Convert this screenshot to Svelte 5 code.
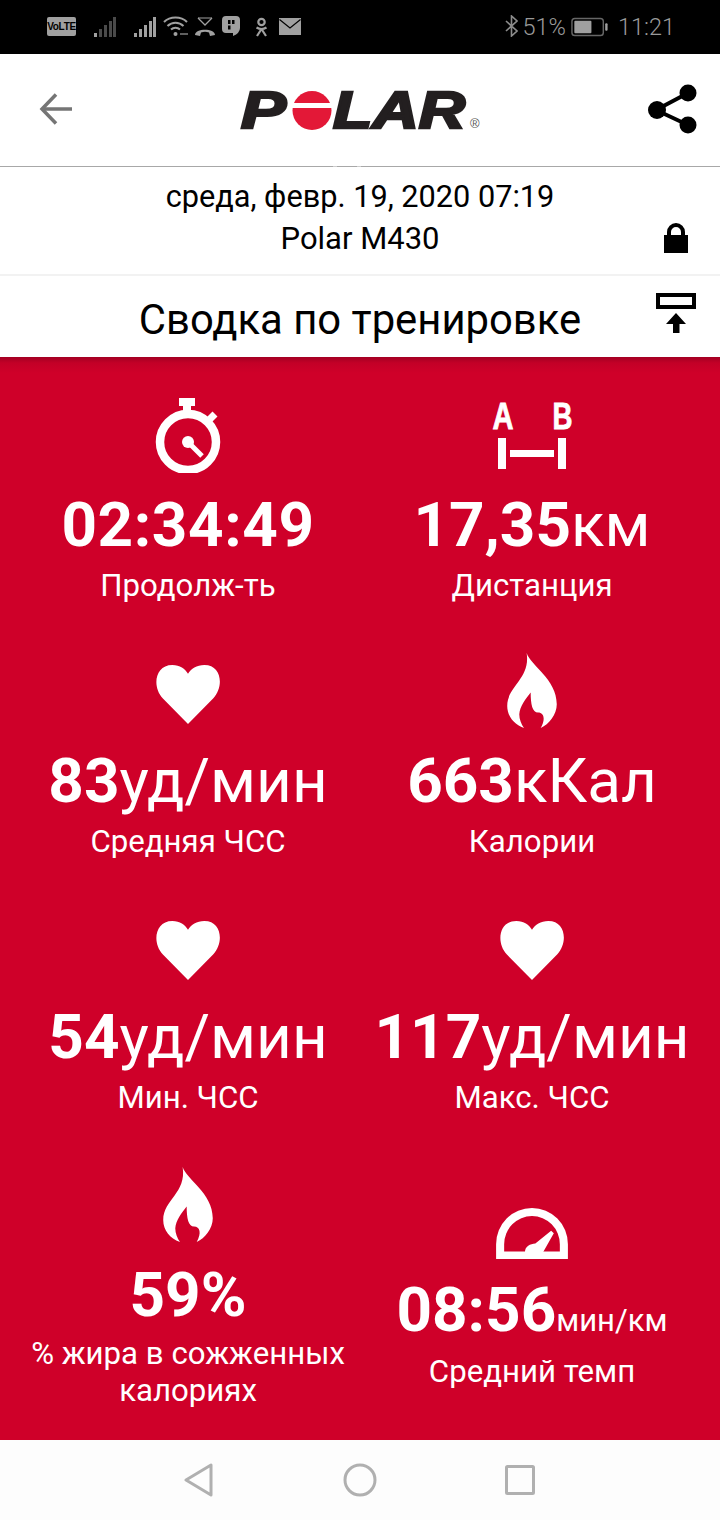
<script>
  const heart = "M144 195 L68 118 C36 84 44 18 97 18 C120 18 135 30 144 44 C153 30 170 18 193 18 C246 18 252 84 220 118 Z";
  const flame = "M138 12 C150 50 228 90 228 165 C228 195 205 225 180 236 C195 210 190 190 172 190 C155 190 150 165 150 130 C135 150 118 170 116 195 C116 210 122 225 130 236 C100 225 80 200 80 170 C80 110 150 90 138 12Z";
</script>

{#snippet heartIcon()}
  <svg class="ic heart" width="64" height="59" viewBox="48 18 192 177"><path d={heart} fill="#fff"/></svg>
{/snippet}
{#snippet flameIcon()}
  <svg class="ic flame" width="50" height="75" viewBox="80 12 148 224"><path d={flame} fill="#fff"/></svg>
{/snippet}

<div class="page">
  <div class="status">
    <span class="volte">VoLTE</span>
    <svg class="s1" width="22" height="20" viewBox="0 0 22 20">
      <g fill="#a0a0a0"><rect x="0" y="16" width="3" height="4"/></g>
      <g fill="#4a4a4a"><rect x="5" y="12" width="3" height="8"/><rect x="10" y="8" width="3" height="12"/><rect x="15" y="4" width="3" height="16"/><rect x="19" y="0" width="3" height="20"/></g>
    </svg>
    <svg class="s2" width="22" height="20" viewBox="0 0 22 20" fill="#a0a0a0">
      <rect x="0" y="16" width="3" height="4"/><rect x="5" y="12" width="3" height="8"/><rect x="10" y="8" width="3" height="12"/><rect x="15" y="4" width="3" height="16"/><rect x="19" y="0" width="3" height="20"/>
    </svg>
    <svg class="s3" width="26" height="21" viewBox="0 0 26 21" fill="none" stroke="#a0a0a0" stroke-width="2">
      <path d="M1 6 C7 0 18 0 24 6"/><path d="M4.500 10 C9 5.500 16 5.500 20.500 10"/><path d="M8 13.500 C10.500 11 14.500 11 17 13.500"/>
      <circle cx="12.500" cy="18" r="2" fill="#a0a0a0" stroke="none"/><path d="M17 18h8" stroke-width="1.200"/>
    </svg>
    <svg class="s4" width="22" height="20" viewBox="0 0 22 20" fill="none" stroke="#a0a0a0">
      <path d="M4 1 L11 8 L18 1" stroke-width="1.300"/><path d="M4 1 H18" stroke-width="1"/>
      <path d="M1 18 C1 11 21 11 21 18 L16 19 L15 15.500 C12 14.500 10 14.500 7 15.500 L6 19Z" fill="#a0a0a0" stroke="none"/>
    </svg>
    <svg class="s5" width="18" height="21" viewBox="0 0 18 21">
      <path d="M4 0 H14 Q18 0 18 4 V12 Q18 17 11 20 L11 17 H4 Q0 17 0 13 V4 Q0 0 4 0Z" fill="#a0a0a0"/>
      <rect x="6" y="4" width="2.500" height="4" fill="#000"/><rect x="10" y="4" width="2.500" height="4" fill="#000"/><rect x="6" y="9.500" width="2.500" height="4" fill="#000"/>
    </svg>
    <svg class="s6" width="13" height="20" viewBox="0 0 13 20" fill="none" stroke="#a0a0a0" stroke-width="2.200">
      <circle cx="6.500" cy="5" r="3.200"/><path d="M1.500 10.500 Q6.500 13.500 11.500 10.500"/><path d="M6.500 12 L2 19 M6.500 12 L11 19"/>
    </svg>
    <svg class="s7" width="22" height="17" viewBox="0 0 22 17">
      <rect width="22" height="17" fill="#a0a0a0"/><path d="M0.500 1.500 L11 10 L21.500 1.500" fill="none" stroke="#000" stroke-width="1.200"/>
    </svg>
    <span class="spacer"></span>
    <svg class="bt" width="13" height="22" viewBox="0 0 13 22" fill="none" stroke="#8c8c8c" stroke-width="1.600">
      <path d="M1 6 L12 16 L6.500 21 V1 L12 6 L1 16"/>
    </svg>
    <span class="pct">51%</span>
    <svg class="bat" width="38" height="20" viewBox="0 0 40 20">
      <rect x="1" y="1" width="33" height="18" rx="3" fill="none" stroke="#666" stroke-width="1.500"/>
      <rect x="3.500" y="3.500" width="18" height="13" rx="1" fill="#a0a0a0"/>
      <rect x="36" y="6" width="2.500" height="8" rx="1" fill="#a0a0a0"/>
    </svg>
    <span class="time">11:21</span>
  </div>

  <header class="top">
    <svg class="back" width="34" height="32" viewBox="0 0 34 32" fill="none" stroke="#757575" stroke-width="3.500">
      <path d="M33 16 H3"/><path d="M17 1.500 L3 16 L17 30.500"/>
    </svg>
    <div class="logo">
      <span class="lg lp">P</span>
      <svg class="lo" width="40" height="39" viewBox="0 0 40 39"><ellipse cx="20" cy="19.500" rx="19.500" ry="19.500" fill="#e31837"/><rect y="12" width="40" height="5" fill="#fff"/></svg>
      <span class="lg lar">LAR</span>
      <span class="reg">®</span>
    </div>
    <svg class="share" width="50" height="50" viewBox="0 0 50 50">
      <path d="M8 26 L40 9 M8 26 L40 41" stroke="#000" stroke-width="4" fill="none"/>
      <circle cx="40" cy="9" r="8.500"/><circle cx="9" cy="26" r="9"/><circle cx="40" cy="41" r="8.500"/>
    </svg>
    <span class="dot d1"></span><span class="dot d2"></span>
  </header>

  <section class="info">
    <div class="date">среда, февр. 19, 2020 07:19</div>
    <div>Polar M430</div>
    <svg class="lock" width="24" height="30" viewBox="0 0 24 30">
      <path d="M5 13 V9 A7 7 0 0 1 19 9 V13" fill="none" stroke="#000" stroke-width="4"/><rect y="12" width="24" height="18"/>
    </svg>
  </section>

  <section class="title">
    <h1>Сводка по тренировке</h1>
    <svg class="export" width="40" height="40" viewBox="0 0 40 40">
      <rect x="2" y="2" width="36" height="12" fill="none" stroke="#000" stroke-width="4"/>
      <path d="M20 20 L30 31 H23.500 V40 H17 V31 H10Z"/>
    </svg>
  </section>

  <main class="grid">
    <div class="cell">
      <svg class="ic watch" width="66" height="76" viewBox="0 0 66 76" fill="none" stroke="#fff">
        <rect x="24" y="1" width="16" height="8" fill="#fff" stroke="none"/>
        <rect x="28" y="8" width="8" height="8" fill="#fff" stroke="none"/>
        <circle cx="33" cy="45" r="28" stroke-width="8.500"/>
        <path d="M52 25 L60 17" stroke-width="7"/>
        <circle cx="33" cy="45" r="6" fill="#fff" stroke="none"/>
        <path d="M33 45 L47 59" stroke-width="5"/>
      </svg>
      <div class="val"><b class="wide">02:34:49</b></div>
      <div class="lab">Продолж-ть</div>
    </div>
    <div class="cell">
      <svg class="ic ab" width="98" height="76" viewBox="-8 -8 98 76" fill="#fff">
        <text x="12" y="27" class="abt" text-anchor="middle" textLength="21" lengthAdjust="spacingAndGlyphs">A</text>
        <text x="71.500" y="27" class="abt" text-anchor="middle" textLength="20" lengthAdjust="spacingAndGlyphs">B</text>
        <rect x="7" y="36" width="8" height="31"/><rect x="19" y="48" width="44" height="7"/><rect x="67" y="36" width="8" height="31"/>
      </svg>
      <div class="val"><b>17,35</b>км</div>
      <div class="lab">Дистанция</div>
    </div>
    <div class="cell">
      {@render heartIcon()}
      <div class="val"><b>83</b>уд/мин</div>
      <div class="lab">Средняя ЧСС</div>
    </div>
    <div class="cell">
      {@render flameIcon()}
      <div class="val"><b>663</b>кКал</div>
      <div class="lab">Калории</div>
    </div>
    <div class="cell">
      {@render heartIcon()}
      <div class="val"><b>54</b>уд/мин</div>
      <div class="lab">Мин. ЧСС</div>
    </div>
    <div class="cell">
      {@render heartIcon()}
      <div class="val"><b>117</b>уд/мин</div>
      <div class="lab">Макс. ЧСС</div>
    </div>
    <div class="cell last-l">
      {@render flameIcon()}
      <div class="val"><b>59%</b></div>
      <div class="lab">% жира в сожженных<br/>калориях</div>
    </div>
    <div class="cell last-r">
      <svg class="ic gauge" width="72" height="51" viewBox="48 40 214 152">
        <path fill="#fff" fill-rule="evenodd" d="M48 192 V148 A107 108 0 0 1 262 148 V192 Z M72 170 H238 V148 A83 84 0 0 0 72 148 Z"/>
        <path fill="#fff" d="M134 172 C134 154 150 147 165 146 L212 108 L220 115 L188 172 Z"/>
      </svg>
      <div class="val"><b>08:56</b><small>мин/км</small></div>
      <div class="lab">Средний темп</div>
    </div>
  </main>

  <nav class="nav">
    <svg width="30" height="34" viewBox="0 0 30 34" fill="none" stroke="#b0b0b0" stroke-width="3" stroke-linejoin="round"><path d="M2 17 L27 2 V32 Z"/></svg>
    <svg width="34" height="34" viewBox="0 0 34 34" fill="none" stroke="#b0b0b0" stroke-width="3"><circle cx="17" cy="17" r="15"/></svg>
    <svg width="30" height="30" viewBox="0 0 30 30" fill="none" stroke="#b0b0b0" stroke-width="3" stroke-linejoin="round"><rect x="1.500" y="1.500" width="27" height="27" rx="1"/></svg>
  </nav>
</div>

<style>
  :global(body) { margin: 0; background: #fff; }
  .page {
    width: 720px; height: 1520px; display: flex; flex-direction: column;
    font-family: Roboto, "Liberation Sans", sans-serif; color: #000; overflow: hidden;
  }
  .status {
    height: 54px; background: #000; display: flex; align-items: center; flex: none;
    padding: 0 45px 0 47px; box-sizing: border-box; color: #9a9a9a;
  }
  .status svg { flex: none; }
  .volte {
    width: 29px; height: 19px; background: #a0a0a0; color: #000; border-radius: 2px;
    font: 700 10px/19px "Liberation Sans", sans-serif; text-align: center; letter-spacing: -0.3px;
    margin-top: -1px;
  }
  .s1 { margin-left: 18px; margin-top: -1px; }
  .s2 { margin-left: 18px; margin-top: -1px; }
  .s3 { margin-left: 7px; margin-top: -1px; }
  .s4 { margin-left: 5px; margin-top: -1px; }
  .s5 { margin-left: 6px; margin-top: -1px; }
  .s6 { margin-left: 15px; margin-top: -1px; }
  .s7 { margin-left: 11px; margin-top: -1px; }
  .spacer { flex: 1; }
  .bt { margin-top: -2px; }
  .pct { font-size: 23.500px; font-weight: 300; margin-left: 4px; margin-top: -1px; }
  .bat { margin-left: 5px; margin-top: -1px; }
  .time { font-size: 23.500px; font-weight: 300; margin-left: 9px; margin-top: -1px; }

  .top {
    height: 113px; flex: none; box-sizing: border-box; position: relative;
    border-bottom: 1px solid #a8a8a8; display: flex; align-items: center; justify-content: space-between;
    padding: 0 22px 1px 39px; background: #fff;
  }
  .back { margin-top: -2px; }
  .share { margin-top: -1px; }
  .logo {
    display: flex; align-items: center; position: absolute; left: 241px; top: 37px; height: 39px;
  }
  .lg {
    font: italic 700 51px/39px "Liberation Sans", sans-serif; color: #231f20;
    -webkit-text-stroke: 2.500px #231f20; transform-origin: left center; display: inline-block;
  }
  .lp { width: 49px; transform: scaleX(1.32); }
  .lar { width: 136px; transform: scaleX(1.26); }
  .lo { margin: 0 1px 0 2px; }
  .reg { font: 400 13px/13px "Liberation Sans", sans-serif; color: #555; align-self: flex-end; margin-left: 1px; }
  .dot { position: absolute; top: 112px; width: 4px; height: 1px; background: #ccc; }
  .d1 { left: 333px; } .d2 { left: 357px; }

  .info {
    height: 109px; flex: none; box-sizing: border-box; position: relative; text-align: center;
    font-size: 31px; line-height: 42px; padding-top: 9px; border-bottom: 2px solid #f2f2f2;
  }
  .date { font-size: 30.700px; }
  .lock { position: absolute; left: 664px; top: 56px; }

  .title {
    height: 81px; flex: none; position: relative; display: flex; justify-content: center; align-items: center;
    background: #fff;
  }
  h1 { font-size: 41.800px; font-weight: 400; margin: 0; line-height: 81px; padding-top: 5px; }
  .export { position: absolute; left: 656px; top: 17px; }

  .grid {
    flex: 1; color: #fff; box-sizing: border-box;
    background: linear-gradient(#a30022 0, #c30027 6px, #cf0029 16px) #cf0029;
    padding: 27px 16px 0; display: grid;
    grid-template-columns: 344px 344px; grid-template-rows: 220px 220px 220px auto; row-gap: 36px;
  }
  .cell { display: flex; flex-direction: column; align-items: center; justify-content: flex-end; text-align: center; }
  .ic { display: block; flex: none; }
  .watch { margin-bottom: 16px; }
  .ab { margin-bottom: 19px; }
  .heart { margin-bottom: 21px; }
  .flame { margin-bottom: 17px; }
  .gauge { margin-bottom: 15px; }
  .val { font-size: 62px; line-height: 72px; white-space: nowrap; }
  .val b { font-weight: 700; }
  .val b.wide { letter-spacing: .6px; }
  .val small { font-size: 31px; line-height: 1; }
  .lab { font-size: 31.200px; line-height: 37px; margin-top: 6px; }
  .abt { font: 700 36px "Liberation Sans", sans-serif; stroke: #fff; stroke-width: .8px; }
  .last-l { justify-content: flex-start; margin-top: 15px; }
  .last-l .lab { margin-top: 4px; }
  .last-r { justify-content: flex-start; margin-top: 56px; }
  .last-r .lab { margin-top: 7px; }

  .nav {
    height: 80px; flex: none; background: #fdfdfd; position: relative;
  }
  .nav svg { position: absolute; }
  .nav svg:nth-child(1) { left: 184px; top: 23px; }
  .nav svg:nth-child(2) { left: 343px; top: 23px; }
  .nav svg:nth-child(3) { left: 505px; top: 25px; }
</style>
